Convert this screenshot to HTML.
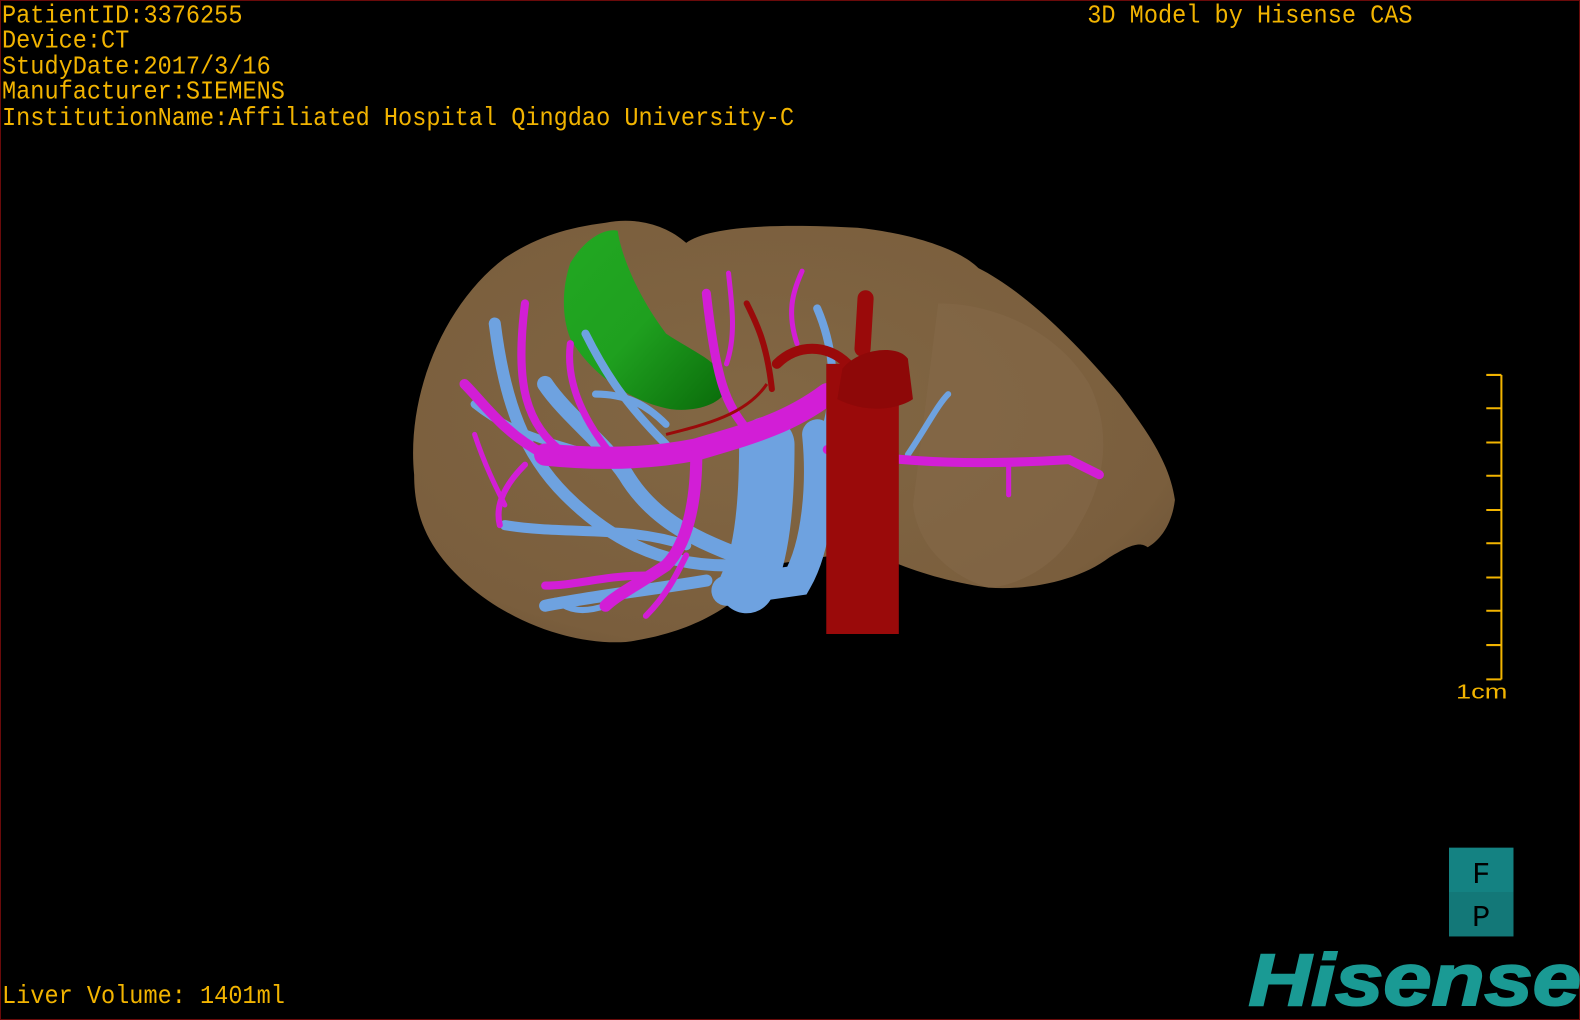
<!DOCTYPE html>
<html><head><meta charset="utf-8"><style>
html,body{margin:0;padding:0;background:#000;overflow:hidden}
#w{position:relative;width:1568px;height:1012px;transform:scale(1.00765,1.0079);transform-origin:0 0;background:#000;box-sizing:border-box;border:1px solid #6a0a0a}
.t{position:absolute;left:1px;font-family:"Liberation Mono",monospace;font-size:23.4px;color:#f2b400;line-height:23.4px;white-space:pre;transform:scaleY(1.08);transform-origin:0 0}
svg{position:absolute;left:0;top:0}
</style></head><body><div id="w">
<svg width="1568" height="1012" viewBox="0 0 1568 1012">
<defs>
<radialGradient id="lg" cx="0.45" cy="0.45" r="0.7"><stop offset="0" stop-color="#826744"/><stop offset="0.8" stop-color="#7a5e3d"/><stop offset="1" stop-color="#6a5236"/></radialGradient>
<linearGradient id="gg" x1="0" y1="0" x2="1" y2="1"><stop offset="0" stop-color="#22a822"/><stop offset="0.5" stop-color="#1fa01f"/><stop offset="1" stop-color="#0a6a0a"/></linearGradient>
</defs>
<path d="M410,470 C402,390 440,300 500,255 C530,235 560,225 600,220 C630,214 660,222 680,240 C700,225 760,220 850,225 C900,230 950,245 970,265 C1010,285 1060,330 1110,390 C1140,430 1160,460 1165,495 C1162,520 1150,535 1138,542 C1130,536 1120,540 1100,552 C1070,575 1020,585 980,582 C930,575 890,560 860,545 L760,560 C740,590 700,625 620,636 C550,640 470,600 432,545 C415,520 410,495 410,470 Z" fill="url(#lg)"/>
<path d="M930,300 C990,300 1050,330 1080,380 C1100,420 1100,470 1070,520 C1050,560 1010,580 980,582 C940,570 910,540 905,500 Z" fill="#86694a" opacity="0.5"/>
<path d="M565,260 C580,235 600,225 612,228 C615,250 630,290 660,330 C690,350 720,360 720,385 C715,400 690,408 665,405 C625,398 585,370 565,335 C555,310 558,280 565,260 Z" fill="url(#gg)"/>
<g stroke="#6ea2e0" stroke-linecap="round" fill="none">
<path d="M760,440 C760,500 755,550 740,580" stroke-width="55"/>
<path d="M810,430 C815,480 810,540 790,575 L720,585" stroke-width="30"/>
<path d="M760,560 C700,540 650,520 620,470 C600,440 560,410 540,380" stroke-width="16"/>
<path d="M720,560 C650,560 600,530 560,490 C520,450 500,400 490,320" stroke-width="12"/>
<path d="M700,575 C640,585 590,590 540,600" stroke-width="12"/>
<path d="M680,540 C620,520 560,530 500,520" stroke-width="10"/>
<path d="M610,460 C570,440 520,440 470,400" stroke-width="8"/>
<path d="M660,440 C620,400 600,370 580,330" stroke-width="8"/>
<path d="M590,390 C620,390 640,400 660,420" stroke-width="7"/>
<path d="M820,420 C830,380 825,340 810,305" stroke-width="8"/>
<path d="M900,450 C920,420 930,400 940,390" stroke-width="6"/>
<path d="M600,600 C570,610 560,600 550,595" stroke-width="6"/>
</g>
<g stroke="#d21ed6" stroke-linecap="round" fill="none">
<path d="M820,390 C780,420 740,430 690,445 C640,455 590,455 540,450" stroke-width="22"/>
<path d="M540,450 C500,430 480,400 460,380" stroke-width="10"/>
<path d="M690,450 C690,500 680,540 660,560 C630,580 610,590 600,600" stroke-width="12"/>
<path d="M640,570 C600,570 570,580 540,580" stroke-width="8"/>
<path d="M560,450 C520,420 510,380 520,300" stroke-width="8"/>
<path d="M610,455 C580,420 560,380 565,340" stroke-width="7"/>
<path d="M520,460 C500,480 490,500 495,520" stroke-width="6"/>
<path d="M740,425 C720,400 710,380 700,290" stroke-width="9"/>
<path d="M720,360 C730,330 725,300 722,270" stroke-width="5"/>
<path d="M790,340 C780,310 785,290 795,268" stroke-width="5"/>
<path d="M820,445 C900,460 980,460 1060,455 L1090,470" stroke-width="9"/>
<path d="M1000,460 L1000,490" stroke-width="5"/>
<path d="M640,610 C660,590 670,570 680,550" stroke-width="6"/>
<path d="M470,430 C480,460 490,480 500,500" stroke-width="5"/>
</g>
<g stroke="#9a0a0a" fill="none">
<path d="M855,345 L858,295" stroke-width="16" stroke-linecap="round"/>
<path d="M855,360 L855,628" stroke-width="72"/>
<path d="M770,360 C790,340 820,340 840,360" stroke-width="10" stroke-linecap="round"/>
<path d="M765,385 C760,340 750,320 740,300" stroke-width="6" stroke-linecap="round"/>
<path d="M760,380 C740,410 700,420 660,430" stroke-width="3"/>
</g>
<path d="M835,365 C850,345 890,340 900,355 L905,395 C890,405 860,410 830,395 Z" fill="#8e0808"/>
</svg>
<div class="t" style="top:4px">PatientID:3376255
Device:CT
StudyDate:2017/3/16
Manufacturer:SIEMENS
InstitutionName:Affiliated Hospital Qingdao University-C</div>
<div class="t" style="top:4px;left:1078px">3D Model by Hisense CAS</div>
<div class="t" style="top:977px">Liver Volume: 1401ml</div>
<svg width="1568" height="1012" viewBox="0 0 1568 1012">
<g stroke="#f2b400" stroke-width="2" fill="none">
<path d="M1489,371 V673"/>
<path d="M1474,371 H1489 M1474,404 H1489 M1474,438 H1489 M1474,471 H1489 M1474,505 H1489 M1474,538 H1489 M1474,572 H1489 M1474,605 H1489 M1474,639 H1489 M1474,673 H1489"/>
</g>
<text x="1444" y="692" font-family="Liberation Sans,sans-serif" font-size="20" fill="#f2b400" textLength="51" lengthAdjust="spacingAndGlyphs">1cm</text>
<rect x="1437" y="840" width="64" height="88" fill="#148282"/>
<rect x="1437" y="884" width="64" height="44" fill="#137878"/>
<text x="1469" y="875" text-anchor="middle" font-family="Liberation Mono,monospace" font-size="30" fill="#000">F</text>
<text x="1469" y="918" text-anchor="middle" font-family="Liberation Mono,monospace" font-size="30" fill="#000">P</text>
<text x="1238" y="996" font-family="Liberation Sans,sans-serif" font-weight="bold" font-style="italic" font-size="73" fill="#1a9a94" stroke="#1a9a94" stroke-width="2" textLength="330" lengthAdjust="spacingAndGlyphs">Hisense</text>
</svg>
</div></body></html>
